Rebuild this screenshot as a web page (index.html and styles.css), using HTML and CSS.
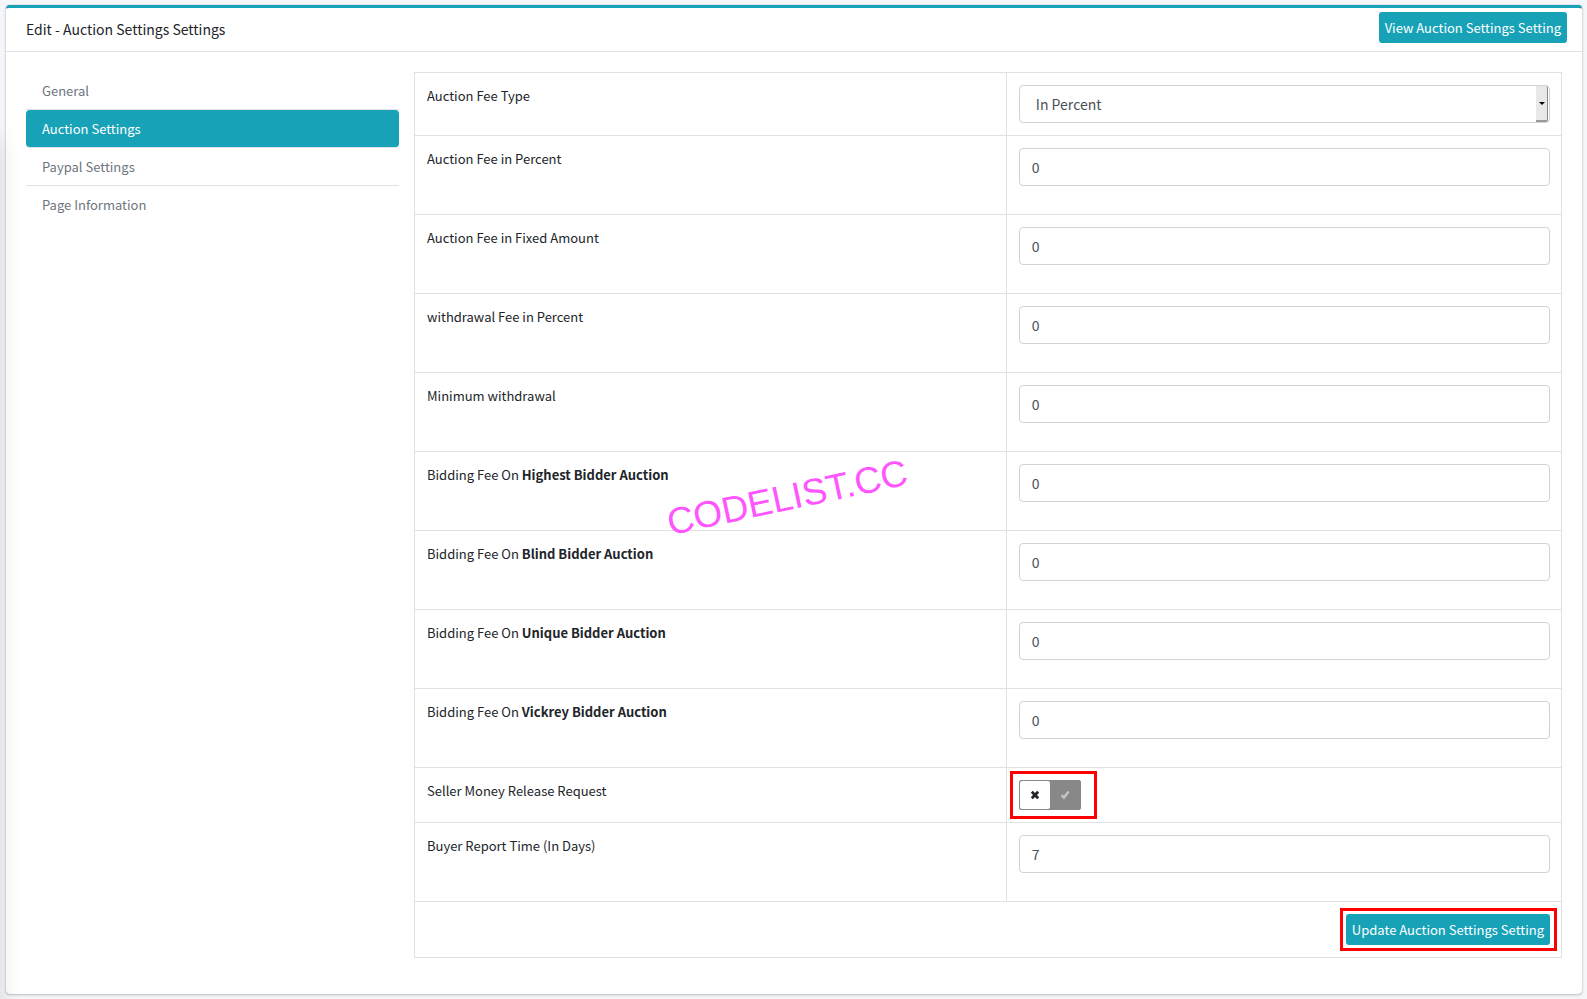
FILE: index.html
```html
<!DOCTYPE html>
<html lang="en">
<head>
<meta charset="utf-8">
<title>Edit - Auction Settings Settings</title>
<link rel="stylesheet" href="styles.css">
</head>
<body>
<main class="card">
  <header class="card-header">
    <h1 class="card-title">Edit - Auction Settings Settings</h1>
    <button type="button" class="btn">View Auction Settings Setting</button>
  </header>
  <div class="card-body">
    <nav class="nav">
      <a class="nav-link" href="#general">General</a>
      <a class="nav-link active" href="#auction" aria-current="page">Auction Settings</a>
      <a class="nav-link" href="#paypal">Paypal Settings</a>
      <a class="nav-link" href="#page">Page Information</a>
    </nav>
    <form class="form">
      <table class="settings">
        <colgroup><col class="col-label"><col class="col-field"></colgroup>
        <tbody>
          <tr>
            <td><label for="fee-type">Auction Fee Type</label></td>
            <td>
              <div class="select-wrap">
                <select id="fee-type" class="control select"><option>In Percent</option><option>Fixed Amount</option></select>
                <span class="select-arrow"></span>
              </div>
            </td>
          </tr>
          <tr><td><label for="f1">Auction Fee in Percent</label></td><td><input id="f1" class="control spaced" type="text" value="0"></td></tr>
          <tr><td><label for="f2">Auction Fee in Fixed Amount</label></td><td><input id="f2" class="control spaced" type="text" value="0"></td></tr>
          <tr><td><label for="f3">withdrawal Fee in Percent</label></td><td><input id="f3" class="control spaced" type="text" value="0"></td></tr>
          <tr><td><label for="f4">Minimum withdrawal</label></td><td><input id="f4" class="control spaced" type="text" value="0"></td></tr>
          <tr><td><label for="f5">Bidding Fee On <b>Highest Bidder Auction</b></label></td><td><input id="f5" class="control spaced" type="text" value="0"></td></tr>
          <tr><td><label for="f6">Bidding Fee On <b>Blind Bidder Auction</b></label></td><td><input id="f6" class="control spaced" type="text" value="0"></td></tr>
          <tr><td><label for="f7">Bidding Fee On <b>Unique Bidder Auction</b></label></td><td><input id="f7" class="control spaced" type="text" value="0"></td></tr>
          <tr><td><label for="f8">Bidding Fee On <b>Vickrey Bidder Auction</b></label></td><td><input id="f8" class="control spaced" type="text" value="0"></td></tr>
          <tr>
            <td><label for="release">Seller Money Release Request</label></td>
            <td>
              <div class="switch marked">
                <input id="release" class="switch-input" type="checkbox">
                <span class="switch-off"><svg width="10" height="10" viewBox="0 0 10 10"><path d="M1.8 1.8 8.2 8.2M8.2 1.8 1.8 8.2" stroke="#212529" stroke-width="2.8" fill="none"/></svg></span>
                <span class="switch-on"><svg width="10" height="10" viewBox="0 0 10 10"><path d="M1.6 5.2 3.9 7.6 8.6 1.6" stroke="#c4c4c4" stroke-width="2.4" fill="none"/></svg></span>
              </div>
            </td>
          </tr>
          <tr><td><label for="f9">Buyer Report Time (In Days)</label></td><td><input id="f9" class="control spaced" type="text" value="7"></td></tr>
          <tr>
            <td colspan="2"><div class="actions"><div class="marked"><button type="submit" class="btn">Update Auction Settings Setting</button></div></div></td>
          </tr>
        </tbody>
      </table>
      <span class="watermark">CODELIST.CC</span>
    </form>
  </div>
</main>
</body>
</html>
```
FILE: styles.css
```css
* { box-sizing: border-box; }

body {
  margin: 0;
  padding: 5px 5px 5px 6px;
  background: #f4f6f9;
  color: #212529;
  font-family: "Noto Sans CJK SC", "Noto Sans", sans-serif;
  font-size: 13px;
  line-height: 20px;
  overflow-x: hidden;
}

/* shadow cast by the off-screen sidebar */
body::before {
  content: "";
  position: fixed;
  z-index: 5;
  top: 124px;
  bottom: -60px;
  left: -26px;
  width: 20px;
  box-shadow: 0 14px 28px rgba(0, 0, 0, .2);
  pointer-events: none;
}

.card {
  background: #fff;
  border-top: 3px solid #17a2b8;
  border-radius: 4px;
  box-shadow: 0 0 1px rgba(0, 0, 0, .4), 0 1px 3px rgba(0, 0, 0, .2);
}

.card-header {
  display: flex;
  justify-content: space-between;
  align-items: flex-start;
  padding: 4px 15px 8px 20px;
  border-bottom: 1px solid #dee2e6;
}

.card-title {
  margin: 5px 0 0;
  font-size: 14px;
  font-weight: 400;
  line-height: 24px;
}

.btn {
  display: block;
  height: 31px;
  padding: 0 6px;
  border: 0;
  border-radius: 3px;
  background: #17a2b8;
  color: #fff;
  font: inherit;
  line-height: 31px;
}

.card-body {
  display: grid;
  grid-template-columns: 373fr 1148fr;
  gap: 15px;
  align-items: start;
  padding: 20px 20px 36px;
}

.nav { display: flex; flex-direction: column; }

.nav-link {
  height: 38px;
  padding: 9px 16px;
  border-bottom: 1px solid #dee2e6;
  color: #6c757d;
  text-decoration: none;
}
.nav-link:last-child { border-bottom: 0; }
.nav-link.active {
  border-radius: 4px;
  background: #17a2b8;
  color: #fff;
}

.form { position: relative; }

.settings {
  width: 100%;
  border-collapse: collapse;
  table-layout: fixed;
}
.col-label { width: 51.6%; }
.settings td {
  padding: 12px 11px 12px 12px;
  border: 1px solid #dee2e6;
  vertical-align: top;
}
.settings label {
  display: block;
  line-height: 22px;
}

.control {
  display: block;
  width: 100%;
  height: 38px;
  padding: 0 12px;
  border: 1px solid #ced4da;
  border-radius: 4px;
  background: #fff;
  color: #495057;
  font: inherit;
  font-size: 14px;
}
.spaced { margin-bottom: 16px; }
.select { padding: 0 16px; appearance: none; }
.select-wrap { position: relative; }
.select-arrow {
  position: absolute;
  top: 1px;
  right: 2px;
  bottom: 1px;
  width: 12px;
  border-right: 1px solid #888;
  border-bottom: 2px solid #999;
  border-radius: 0 2px 2px 0;
  background: #e8e8e6;
  pointer-events: none;
}
.select-arrow::after {
  content: "";
  position: absolute;
  top: 16px;
  left: 3px;
  border: 3px solid transparent;
  border-top-color: #000;
}

.marked {
  position: relative;
}
.marked::after {
  content: "";
  position: absolute;
  inset: -6px -7px -6px -6px;
  border: 3px solid #f00;
  pointer-events: none;
}

.switch {
  display: flex;
  width: 62px;
  height: 30px;
  border: 1px solid #888;
  border-radius: 2px;
  background: #888;
}
.switch::after { inset: -10px -17px -10px -10px; }
.switch-input {
  position: absolute;
  inset: 0;
  width: 100%;
  height: 100%;
  margin: 0;
  opacity: 0;
}
.switch-off, .switch-on {
  display: flex;
  flex: 1;
  align-items: center;
  justify-content: center;
}
.switch-off { border-radius: 2px; background: #fff; }

.actions { display: flex; justify-content: flex-end; }

.watermark {
  position: absolute;
  top: 400px;
  left: 251px;
  color: #ff55ff;
  font-family: "Liberation Sans", sans-serif;
  font-size: 37px;
  line-height: 52px;
  transform: rotate(-12deg);
  pointer-events: none;
}
```
